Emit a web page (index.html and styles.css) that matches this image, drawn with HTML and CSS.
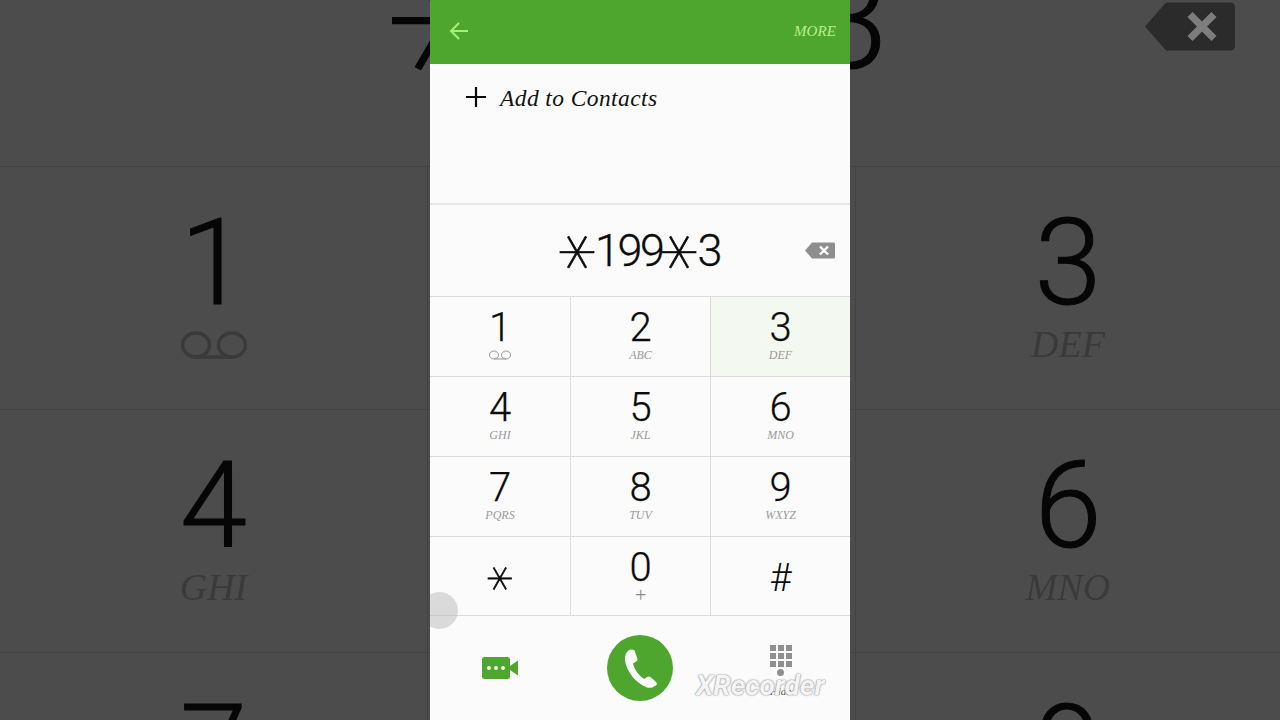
FILE: index.html
```html
<!DOCTYPE html>
<html lang="en">
<head>
<meta charset="utf-8">
<title>Dialer</title>
<link rel="stylesheet" href="styles.css">
</head>
<body>
<div class="stage">
  <div class="backdrop">
    <div class="bd-top">
      <div class="bd-number"><span class="star">*</span>199<span class="star">*</span>3</div>
      <svg class="bd-back" viewBox="0 0 30 17"><path class="back-body" d="M0 8.500 7 0.500H28.500A1.500 1.500 0 0 1 30 2V15A1.500 1.500 0 0 1 28.500 16.500H7Z"/><path class="back-x" d="M15 4.500 23 12.500M23 4.500 15 12.500"/></svg>
    </div>
    <div class="bd-grid">
      <div class="bd-key"><div class="bd-digit">1</div><svg class="bd-vm" viewBox="0 0 22 10"><ellipse cx="5" cy="5" rx="4.500" ry="4"/><ellipse cx="17" cy="5" rx="4.500" ry="4"/><path d="M5 9H17"/></svg></div>
      <div class="bd-key"></div>
      <div class="bd-key"><div class="bd-digit">3</div><div class="bd-label">DEF</div></div>
      <div class="bd-key"><div class="bd-digit">4</div><div class="bd-label">GHI</div></div>
      <div class="bd-key"></div>
      <div class="bd-key"><div class="bd-digit">6</div><div class="bd-label">MNO</div></div>
      <div class="bd-key"><div class="bd-digit">7</div></div>
      <div class="bd-key"></div>
      <div class="bd-key"><div class="bd-digit">9</div></div>
    </div>
  </div>

  <main class="phone">
    <header class="appbar">
      <svg class="arrow" viewBox="0 0 20 20"><path d="M19 10H2M10 2 2 10 10 18"/></svg>
      <span class="more">MORE</span>
    </header>
    <section class="contacts">
      <svg class="plus" viewBox="0 0 20 20"><path d="M10 0V20M0 10H20"/></svg>
      <span class="add">Add to Contacts</span>
    </section>
    <section class="number-row">
      <div class="number"><span class="star">*</span>199<span class="star">*</span>3</div>
      <svg class="back" viewBox="0 0 30 17"><path class="back-body" d="M0 8.500 7 0.500H28.500A1.500 1.500 0 0 1 30 2V15A1.500 1.500 0 0 1 28.500 16.500H7Z"/><path class="back-x" d="M15 4.500 23 12.500M23 4.500 15 12.500"/></svg>
    </section>
    <section class="keypad">
      <div class="key"><div class="digit">1</div><svg class="vm" viewBox="0 0 22 10"><ellipse cx="5" cy="5" rx="4.500" ry="4"/><ellipse cx="17" cy="5" rx="4.500" ry="4"/><path d="M5 9H17"/></svg></div>
      <div class="key"><div class="digit">2</div><div class="label">ABC</div></div>
      <div class="key key-active"><div class="digit">3</div><div class="label">DEF</div></div>
      <div class="key"><div class="digit">4</div><div class="label">GHI</div></div>
      <div class="key"><div class="digit">5</div><div class="label">JKL</div></div>
      <div class="key"><div class="digit">6</div><div class="label">MNO</div></div>
      <div class="key"><div class="digit">7</div><div class="label">PQRS</div></div>
      <div class="key"><div class="digit">8</div><div class="label">TUV</div></div>
      <div class="key"><div class="digit">9</div><div class="label">WXYZ</div></div>
      <div class="key key-symbol"><span class="star star-key">*</span></div>
      <div class="key"><div class="digit">0</div><div class="label label-plus">+</div></div>
      <div class="key key-symbol"><span class="hash">#</span></div>
    </section>
    <section class="actions">
      <svg class="video" viewBox="0 0 36 22"><path class="video-body" d="M2.500 0H25.500A2.500 2.500 0 0 1 28 2.500V19.500A2.500 2.500 0 0 1 25.500 22H2.500A2.500 2.500 0 0 1 0 19.500V2.500A2.500 2.500 0 0 1 2.500 0ZM28 9 36 3.500V18.500L28 13Z"/><circle class="video-dot" cx="7" cy="11" r="2"/><circle class="video-dot" cx="14" cy="11" r="2"/><circle class="video-dot" cx="21" cy="11" r="2"/></svg>
      <div class="call"><svg class="handset" viewBox="0 0 33 39"><path d="M4 2C6 0 9 0 10.500 1.500L13.500 10C14 12 11.500 13 9 14.500C10 20 15 27 20.500 30C22.500 28 24.500 26.500 26.500 28L32 33C33.500 34.500 33 36 31 37C28 39 25 39.500 22 38C12 34 3 23 1 12C0.500 8 1.500 4 4 2Z"/></svg></div>
      <div class="pad-col">
        <div class="pad"><i></i><i></i><i></i><i></i><i></i><i></i><i></i><i></i><i></i><i class="pad-dot"></i></div>
        <span class="hide">Hide</span>
      </div>
    </section>
    <div class="touch"></div>
  </main>
  <div class="watermark">XRecorder</div>
</div>
</body>
</html>
```

FILE: styles.css
```css
* { box-sizing: border-box; }
html, body { margin: 0; height: 100%; }
body { background: #4c4c4c; font-family: Roboto, "Liberation Sans", sans-serif; }

.stage { position: relative; width: 1280px; height: 720px; overflow: hidden; background: #4c4c4c; }

/* The asterisk: DejaVu's six-armed glyph turned so one stroke lies flat */
.star { display: inline-block; width: 35px; height: 1em; margin: -0.5em 0; vertical-align: middle; text-align: center; font-family: "DejaVu Sans", sans-serif; font-weight: 200; font-size: 75px; line-height: 1; letter-spacing: 0; -webkit-text-stroke: 0.7px currentColor; transform-origin: 50% 32.5%; transform: translateY(0.14em) rotate(90deg); }

/* Blurred, enlarged copy of the dialer behind the phone video */
.backdrop { position: absolute; inset: 0; overflow: hidden; filter: blur(0.7px); color: #060606; }
.bd-top { height: 166px; display: flex; justify-content: center; align-items: flex-start; position: relative; overflow: hidden; }
.bd-number { height: 54px; line-height: 54px; font-size: 136px; font-weight: 300; letter-spacing: -7px; white-space: nowrap; margin-top: -5px; -webkit-text-stroke: 1px currentColor; }
.bd-number .star { width: 104px; font-size: 228px; -webkit-text-stroke: 2px currentColor; transform: translate(-4px, 0.105em) rotate(90deg); }
.bd-back { position: absolute; right: 45px; top: 0; width: 90px; height: 53px; }
.bd-back .back-body { fill: #2b2b2b; }
.bd-back .back-x { stroke: #7d7d7d; stroke-width: 2.400; fill: none; }
.bd-grid { display: grid; grid-template-columns: 427px 428px 425px; grid-auto-rows: 243px; }
.bd-key { border-top: 1px solid #424242; border-left: 1px solid #424242; display: flex; flex-direction: column; align-items: center; padding-top: 36px; }
.bd-key:nth-child(3n+1) { border-left: 0; }
.bd-digit { font-size: 121px; line-height: 121px; font-weight: 300; height: 121px; -webkit-text-stroke: 1px currentColor; }
.bd-label { font-family: "Liberation Serif", serif; font-style: italic; font-size: 38px; line-height: 40px; color: #3a3a3a; }
.bd-vm { width: 66px; height: 30px; margin-top: 6px; fill: none; stroke: #3a3a3a; stroke-width: 1.200; }

/* Phone */
.phone { position: relative; width: 420px; height: 720px; margin: 0 auto; background: #fbfbfb; display: flex; flex-direction: column; overflow: hidden; }
.appbar { height: 64px; background: #4fa62f; display: flex; align-items: center; justify-content: space-between; padding: 0 14px 2px 19px; flex: none; }
.arrow { width: 20px; height: 20px; fill: none; stroke: #a4f178; stroke-width: 2; }
.more { font-family: "Liberation Serif", serif; font-style: italic; color: #b6f08e; font-size: 15px; letter-spacing: 0.1px; }

.contacts { height: 141px; border-bottom: 2px solid #e6e6e6; display: flex; align-items: flex-start; padding: 23px 0 0 36px; flex: none; }
.plus { width: 20px; height: 20px; fill: none; stroke: #0a0a0a; stroke-width: 2.200; margin-right: 14px; flex: none; }
.add { font-family: "Liberation Serif", serif; font-style: italic; font-size: 23.500px; line-height: 22px; color: #111; letter-spacing: 0.4px; white-space: nowrap; }

.number-row { height: 91px; position: relative; display: flex; align-items: center; justify-content: center; flex: none; }
.number { font-size: 45px; line-height: 50px; height: 50px; font-weight: 300; letter-spacing: -2.500px; color: #0c0c0c; white-space: nowrap; -webkit-text-stroke: 0.3px currentColor; }
.back { position: absolute; right: 15px; top: 37px; width: 30px; height: 17px; }
.back-body { fill: #8e8e8e; }
.back-x { stroke: #fff; stroke-width: 2.400; fill: none; }

.keypad { display: grid; grid-template-columns: 140px 140px 140px; grid-template-rows: 80px 80px 80px 79px; border-bottom: 1px solid #dcdcdc; flex: none; height: 320px; }
.key { border-top: 1px solid #dcdcdc; border-left: 1px solid #dcdcdc; display: flex; flex-direction: column; align-items: center; padding-top: 11px; color: #0c0c0c; }
.key:nth-child(3n+1) { border-left: 0; }
.key-active { background: #f3f8f0; }
.key-symbol { justify-content: center; padding-top: 4px; }
.digit { font-size: 40px; line-height: 40px; height: 40px; font-weight: 300; -webkit-text-stroke: 0.25px currentColor; }
.label { font-family: "Liberation Serif", serif; font-style: italic; font-size: 12px; line-height: 14px; color: #9a9a9a; }
.label-plus { font-size: 20px; color: #8a8a8a; }
.vm { width: 22px; height: 10px; margin-top: 2px; fill: none; stroke: #999; stroke-width: 1; }
.star-key { width: 30px; font-size: 52px; margin: 0; height: 30px; line-height: 30px; transform-origin: 50% 32%; transform: translate(-4px, 6px) rotate(90deg); }
.hash { font-size: 38px; line-height: 38px; font-weight: 300; }

.actions { flex: 1; display: grid; grid-template-columns: 140px 140px 140px; justify-items: center; align-items: start; }
.video { width: 36px; height: 22px; margin-top: 41px; }
.video-body { fill: #4fa62f; }
.video-dot { fill: #e8f6df; }
.call { width: 66px; height: 66px; border-radius: 50%; background: #4fa62f; margin-top: 19px; display: flex; align-items: center; justify-content: center; }
.handset { width: 33px; height: 39px; fill: #fbfbfb; }
.pad-col { display: flex; flex-direction: column; align-items: center; margin-top: 29px; margin-left: 1px; }
.pad { display: grid; grid-template-columns: 6px 6px 6px; grid-auto-rows: 6px; gap: 2px; justify-items: center; }
.pad i { background: #8f8f8f; width: 6px; height: 6px; }
.pad .pad-dot { grid-column: 2; border-radius: 50%; width: 7px; height: 7px; }
.hide { font-family: "Liberation Serif", serif; font-style: italic; font-size: 11px; line-height: 12px; color: #555; margin-top: 10px; }

.touch { position: absolute; left: -9px; top: 592px; width: 37px; height: 37px; border-radius: 50%; background: rgba(170, 170, 170, 0.4); }

.watermark { position: absolute; left: 696px; top: 671px; font-family: Roboto, sans-serif; font-style: italic; font-weight: 700; font-size: 28px; line-height: 30px; color: #f4f4f4; text-shadow: 0 0 2px #8a8a8a, 0 0 1px #8a8a8a; }
```
